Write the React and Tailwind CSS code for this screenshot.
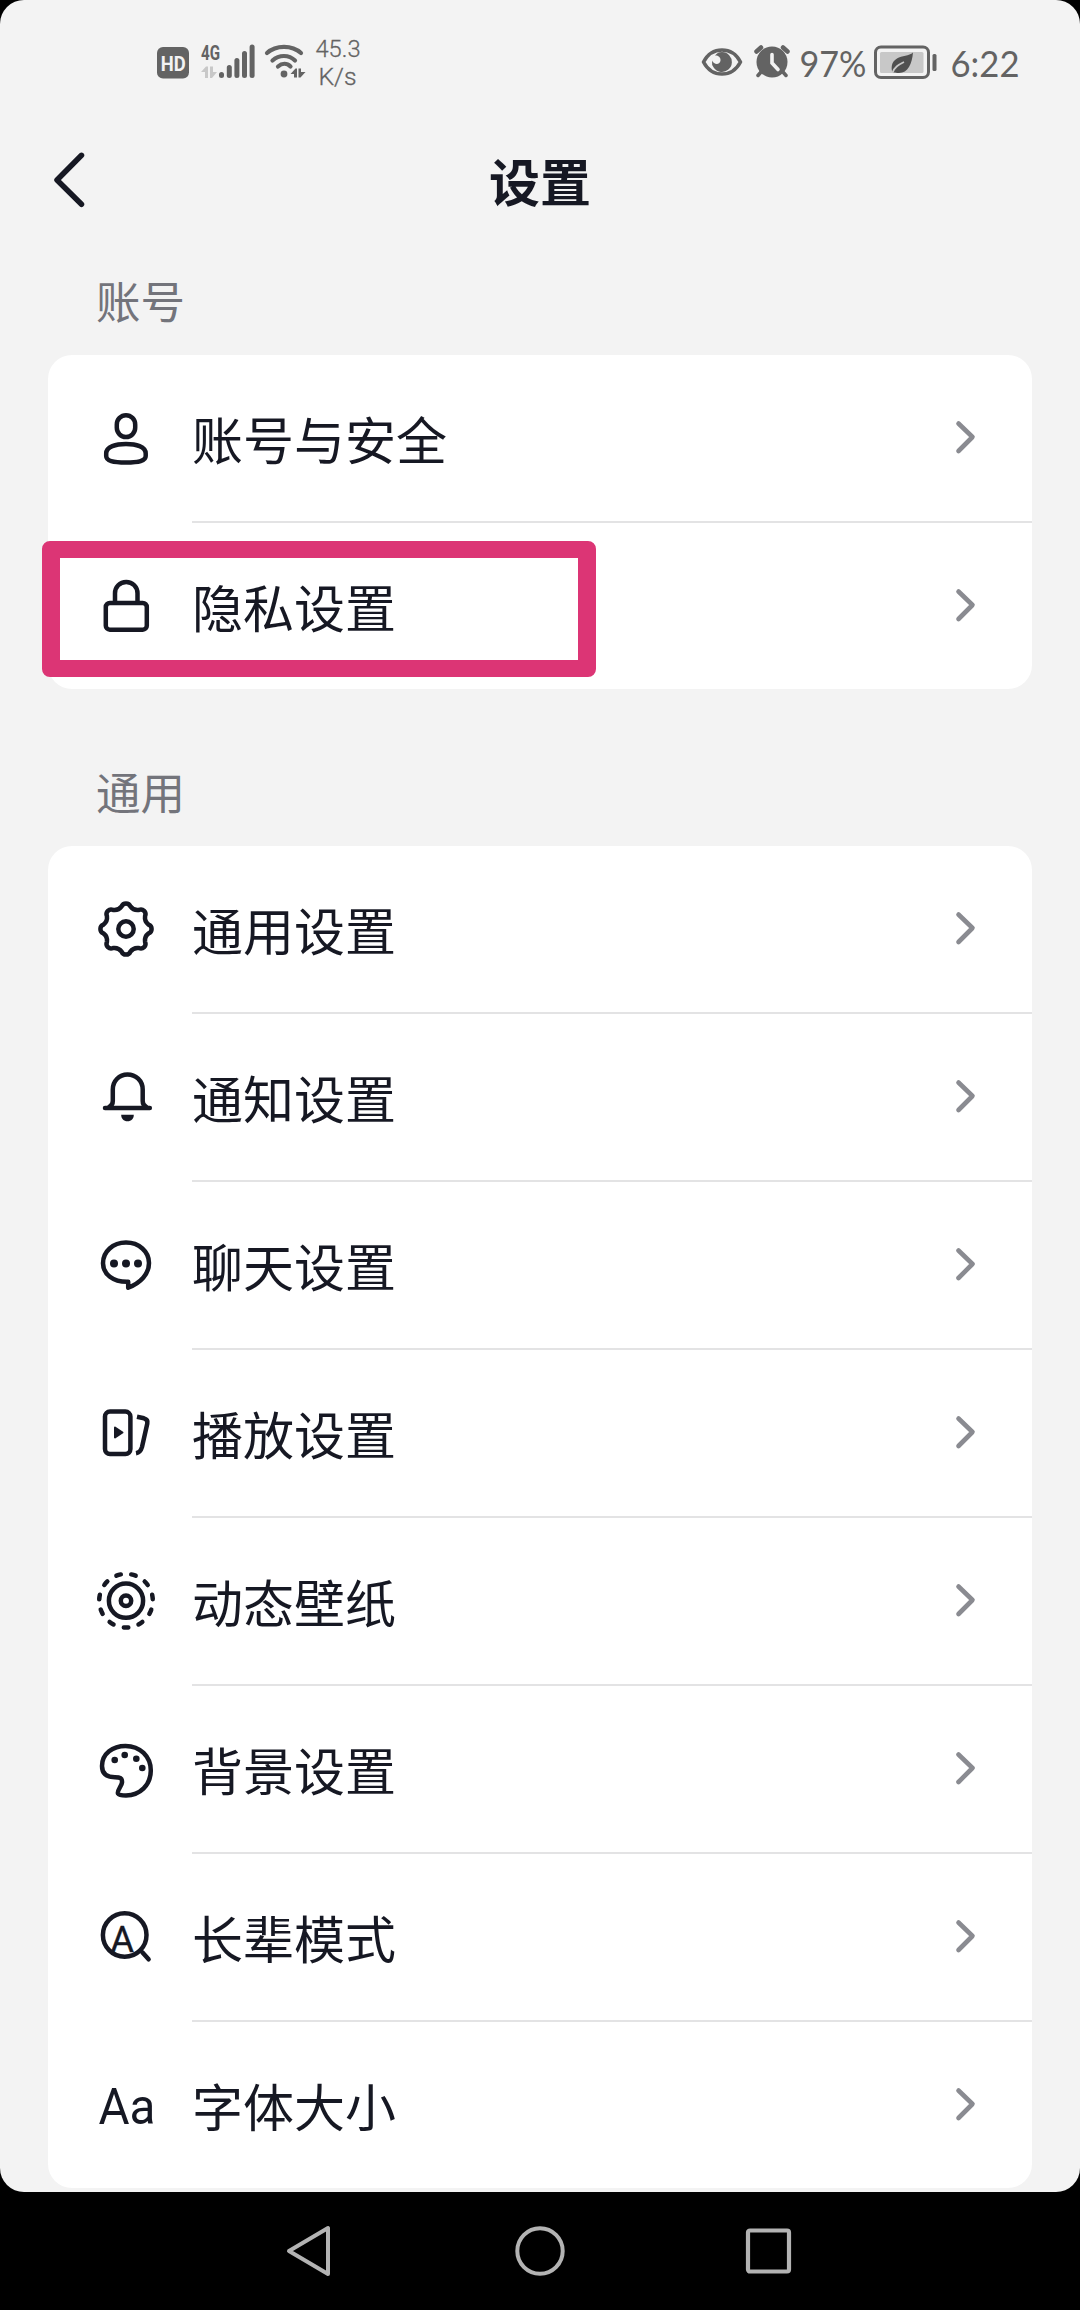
import React from "react";

const ink = "#161823";
const gray = "#636363";

// eight-lobed outline of the gear: round lobes joined by shallow valleys
const polar = (deg) => {
  const a = (deg * Math.PI) / 180;
  return `${(30 + 23 * Math.cos(a)).toFixed(2)} ${(30 + 23 * Math.sin(a)).toFixed(2)}`;
};
const gearPath =
  `M${polar(-11)}` +
  Array.from({ length: 8 }, (_, i) => `A4.7 4.7 0 0 1 ${polar(i * 45 + 11)}A9 9 0 0 0 ${polar(i * 45 + 34)}`).join("") +
  "Z";

const Icon = ({ children }) => (
  <svg
    className="w-[60px] h-[60px] shrink-0 overflow-visible"
    viewBox="0 0 60 60"
    fill="none"
    stroke={ink}
    strokeWidth="4.5"
    strokeLinecap="round"
    strokeLinejoin="round"
  >
    {children}
  </svg>
);

const UserIcon = () => (
  <Icon>
    <rect x="20.8" y="7.2" width="18.4" height="21.8" rx="9.2" />
    <path d="M30 35.9C40 35.9 49.7 38.5 49.7 45.5V48C49.7 53 43 54.5 30 54.5S10.2 53 10.2 48V45.5C10.2 38.5 20 35.9 30 35.9Z" />
  </Icon>
);

const LockIcon = () => (
  <Icon>
    <rect x="9.8" y="26.9" width="41" height="26.8" rx="4" />
    <path d="M19 26.5V17.3C19 11 23.8 6 30.2 6S41.5 11 41.5 17.3V26.5" />
  </Icon>
);

const GearIcon = () => (
  <Icon>
    <path d={gearPath} />
    <circle cx="30" cy="30" r="7.7" />
  </Icon>
);

const BellIcon = () => (
  <Icon>
    <path d="M13.5 39.5C15.8 38.5 16.8 36.500 16.8 34V22.5C16.8 13.8 23.3 7.5 31.5 7.5S46.7 13.8 46.7 22.5V34C46.7 36.500 47.600 38.500 50 39.5" />
    <path d="M9 41H53.8" />
    <path d="M25.2 47.8H37.8C37.8 51.8 35.3 54.3 31.5 54.3S25.2 51.8 25.2 47.8Z" fill={ink} stroke="none" />
  </Icon>
);

const ChatIcon = () => (
  <Icon>
    <path d="M32 46.8C17 47.2 7 39 7 28.3C7 16.5 17 7.6 30 7.6S53 16.5 53 28C53 39 44.5 48 32.2 52.6V46.8Z" />
    <g fill={ink} stroke="none">
      <circle cx="18" cy="28.5" r="4" />
      <circle cx="30" cy="28.5" r="4" />
      <circle cx="42" cy="28.5" r="4" />
    </g>
  </Icon>
);

const PlayIcon = () => (
  <Icon>
    <rect x="9" y="8.6" width="25.4" height="42.4" rx="5" />
    <path d="M19 24.5L26.5 29.5L19 34.5Z" fill={ink} strokeWidth="2" />
    <path d="M41 13.8L48 15.3Q52.2 16.5 51.3 20.5L46 44Q44.5 49.5 40 50.2" strokeLinecap="butt" />
  </Icon>
);

const WallpaperIcon = () => (
  <Icon>
    <circle cx="30" cy="29.7" r="17.1" />
    <circle cx="30" cy="29.7" r="5.2" />
    <circle cx="30" cy="29.7" r="26.8" pathLength="110" strokeDasharray="3 7" transform="rotate(85.1 30 29.7)" />
  </Icon>
);

const PaletteIcon = () => (
  <Icon>
    <path d="M29.5 6.9C44 6.9 54.8 17.5 54.8 31.5C54.8 46 44 56.4 30 56.4C26.5 56.4 23 56.2 22 54.6C20.6 52 25.8 47 26 43.5C26.3 39 24 38.2 19 38.2C10.5 38.2 6 34.5 6 27C6 14.5 17 6.9 29.5 6.9Z" />
    <g fill={ink} stroke="none">
      <circle cx="18.7" cy="21" r="3.3" />
      <circle cx="28.7" cy="16" r="3.3" />
      <circle cx="40.3" cy="19.7" r="3.3" />
      <circle cx="46.3" cy="29" r="3.3" />
    </g>
  </Icon>
);

const ElderIcon = () => (
  <Icon>
    <circle cx="28.7" cy="28" r="21.8" />
    <path d="M46.3 45.3L52.6 52.3" />
    <text x="26.3" y="44.9" textAnchor="middle" fontFamily="Roboto, sans-serif" fontSize="36" fill={ink} stroke={ink} strokeWidth="0.4">
      A
    </text>
  </Icon>
);

const FontIcon = () => (
  <Icon>
    <text x="2.5" y="48.6" textLength="57" lengthAdjust="spacingAndGlyphs" fontFamily="Roboto, sans-serif" fontSize="50.5" fill={ink} stroke="none">
      Aa
    </text>
  </Icon>
);

const sections = [
  {
    title: "账号",
    items: [
      { label: "账号与安全", icon: UserIcon },
      { label: "隐私设置", icon: LockIcon, marked: true },
    ],
  },
  {
    title: "通用",
    items: [
      { label: "通用设置", icon: GearIcon },
      { label: "通知设置", icon: BellIcon },
      { label: "聊天设置", icon: ChatIcon },
      { label: "播放设置", icon: PlayIcon },
      { label: "动态壁纸", icon: WallpaperIcon },
      { label: "背景设置", icon: PaletteIcon },
      { label: "长辈模式", icon: ElderIcon },
      { label: "字体大小", icon: FontIcon },
    ],
  },
];

const StatusBar = () => (
  <div className="h-[124px] flex items-start justify-between pl-[157px] pr-[60px] text-[#636363]">
    <div className="flex items-start pt-9">
      <svg className="mt-[11px] w-8 h-8 overflow-visible" viewBox="0 0 32 32">
        <rect width="32" height="31.5" rx="6" fill={gray} />
        <text x="3.8" y="23.5" textLength="25" lengthAdjust="spacingAndGlyphs" fontFamily="Roboto, sans-serif" fontSize="20.5" fontWeight="700" fill="#f3f3f3">
          HD
        </text>
      </svg>
      <svg className="ml-3 mt-[7px] w-[56px] h-9 overflow-visible" viewBox="0 0 56 36" fill={gray}>
        <text x="0" y="17" textLength="19" lengthAdjust="spacingAndGlyphs" fontFamily="Roboto, sans-serif" fontSize="20.5" fontWeight="700">
          4G
        </text>
        <path d="M0 29L5 23.5H7V35H4V29ZM9 23.5H12V29H16L11 35H9Z" fill="#c8c8c8" />
        <rect x="18" y="29" width="5" height="6" rx="2.5" />
        <rect x="25.8" y="22" width="5" height="13" rx="2.5" />
        <rect x="33.4" y="15" width="5" height="20" rx="2.5" />
        <rect x="41" y="8" width="5" height="27" rx="2.5" />
        <rect x="48.6" y="1.5" width="5" height="33.5" rx="2.5" />
      </svg>
      <svg className="ml-[7px] mt-[7px] w-[42px] h-9" viewBox="0 0 42 36" fill="none" stroke={gray} strokeWidth="4.2" strokeLinecap="round">
        <path d="M3 10C12 1.8 28 1.8 37 10" />
        <path d="M8.5 17.5C15 11.5 25 11.5 31 17.5" />
        <path d="M14 23.5C18 20 23 20 26.5 23.5" />
        <circle cx="20" cy="31" r="3.4" fill={gray} stroke="none" />
        <path d="M26.5 31L31.5 25.5H33V34.5H30V31ZM34.5 25.5H37V29H41.5L36.5 34.5H34.5Z" fill={gray} stroke="none" />
      </svg>
      <svg className="ml-[9px] w-[46px] h-[54px] overflow-visible" viewBox="0 0 46 54" fill={gray} fontFamily="Roboto, sans-serif" fontSize="24.5">
        <text x="0.5" y="21" textLength="45" lengthAdjust="spacingAndGlyphs" fontWeight="300" stroke={gray} strokeWidth="0.3">
          45.3
        </text>
        <text x="3.5" y="49" textLength="38" lengthAdjust="spacingAndGlyphs" fontWeight="300" stroke={gray} strokeWidth="0.3">
          K/s
        </text>
      </svg>
    </div>

    <div className="flex items-start pt-[44px]">
      <svg className="w-[42px] h-9" viewBox="0 0 42 36" fill="none" stroke={gray} strokeWidth="3.6">
        <path d="M2.5 18C11 2 31 2 39.5 18C31 34 11 34 2.5 18Z" strokeLinejoin="round" />
        <path d="M21 8A10 10 0 1 1 11 16.5C13 21 19 21 19.5 16.5C20 12.5 16 11 14 11.5C16 9 18 8 21 8Z" fill={gray} stroke="none" />
      </svg>
      <svg className="ml-[10px] w-[38px] h-9" viewBox="0 0 38 36" fill="none" stroke={gray} strokeWidth="4" strokeLinecap="round">
        <circle cx="19" cy="18" r="15.5" fill={gray} stroke="none" />
        <path d="M3.5 7.5L8 3.5M34.5 7.5L30 3.5" strokeWidth="4.5" />
        <path d="M8 28L5 31.500M30 28L33 31.500" strokeWidth="3.5" />
        <path d="M19 10.5V19L25 25.5" stroke="#f3f3f3" strokeWidth="3.6" />
      </svg>
      <svg className="ml-2 w-[70px] h-9 overflow-visible" viewBox="0 0 70 36" fill={gray}>
        <text x="0.5" y="33" textLength="67" lengthAdjust="spacingAndGlyphs" fontFamily="Lato, sans-serif" fontSize="37">
          97%
        </text>
      </svg>
      <svg className="ml-[5px] w-16 h-9" viewBox="0 0 64 36" fill="none">
        <rect x="1.500" y="3" width="53" height="30.5" rx="5.5" stroke={gray} strokeWidth="3" />
        <rect x="6" y="8" width="43.5" height="21" rx="1.5" fill="#c8c8c8" />
        <path d="M39 8.5C38 20 34 29 25 29C22.5 29 21 28.5 20.5 28.5L18.5 29C17 24 17 18 23 14.5C28 11.500 35 12 39 8.5Z" fill="#505050" />
        <path d="M18.5 29C20 23 25 20.5 30 18" stroke="#c8c8c8" strokeWidth="1.8" />
        <rect x="58.5" y="10" width="4" height="17" rx="1.5" fill={gray} />
      </svg>
      <svg className="ml-3 w-[70px] h-9 overflow-visible" viewBox="0 0 70 36" fill={gray}>
        <text x="0.5" y="33" textLength="69" lengthAdjust="spacingAndGlyphs" fontFamily="Lato, sans-serif" fontSize="37">
          6:22
        </text>
      </svg>
    </div>
  </div>
);

const Row = ({ item, last }) => {
  const ItemIcon = item.icon;
  return (
    <div className="relative flex pl-12">
      <div className="flex items-center w-24 h-[166px]">
        <ItemIcon />
      </div>
      <div className={last ? "flex-1 h-[166px]" : "flex-1 h-[168px] border-b-2 border-[#e3e3e4]"}>
        <div className="flex items-center justify-between h-[166px] pr-[54px]">
          <span className="text-[51px] leading-none">{item.label}</span>
          <svg className="w-6 h-9" viewBox="0 0 24 36" fill="none" stroke="#8a8b91" strokeWidth="4.6" strokeLinecap="round" strokeLinejoin="round">
            <path d="M4.5 3.5L18.5 17L4.5 31" />
          </svg>
        </div>
      </div>
      {item.marked && (
        <div className="absolute -left-[6px] top-[18px] w-[554px] h-[136px] border-x-[18px] border-y-[17px] border-[#dc3575] rounded-[8px]"></div>
      )}
    </div>
  );
};

const NavBar = () => (
  <div className="h-[118px] flex items-center justify-center gap-[176px]">
    <svg className="w-[54px] h-[54px]" viewBox="0 0 54 54" fill="none" stroke="#b3b3b3" strokeWidth="4" strokeLinejoin="round">
      <path d="M45 4V50L6 27Z" />
    </svg>
    <svg className="w-[54px] h-[54px]" viewBox="0 0 54 54" fill="none" stroke="#b3b3b3" strokeWidth="4">
      <circle cx="27" cy="27" r="22.7" />
    </svg>
    <svg className="w-[54px] h-[54px]" viewBox="0 0 54 54" fill="none" stroke="#b3b3b3" strokeWidth="4.2">
      <rect x="5" y="6.5" width="41" height="41" rx="2" />
    </svg>
  </div>
);

const App = () => {
  return (
    <div className="w-[1080px] h-[2310px] bg-black overflow-hidden font-['Noto_Sans_CJK_SC',sans-serif] text-[#161823]">
      <div className="h-[2192px] bg-[#f3f3f3] rounded-[24px] overflow-hidden">
        <StatusBar />
        <header className="flex items-center h-[116px] px-12">
          <button className="w-12 h-16 flex items-center">
            <svg className="w-12 h-16" viewBox="0 0 48 64" fill="none" stroke={ink} strokeWidth="5.5" strokeLinecap="round" strokeLinejoin="round">
              <path d="M33.5 5.300L9 30L33.5 54.300" />
            </svg>
          </button>
          <h1 className="flex-1 text-center text-[51px] leading-none font-bold pr-12 pb-[3px]">设置</h1>
        </header>

        {sections.map((section) => (
          <section key={section.title} className="px-12 mb-[42px]">
            <h2 className="h-[115px] pl-12 flex items-center text-[44.5px] leading-none text-[#73747b] pt-[6px]">
              {section.title}
            </h2>
            <div className="bg-white rounded-[24px]">
              {section.items.map((item, i) => (
                <Row key={item.label} item={item} last={i === section.items.length - 1} />
              ))}
            </div>
          </section>
        ))}
      </div>
      <NavBar />
    </div>
  );
};

export default App;
